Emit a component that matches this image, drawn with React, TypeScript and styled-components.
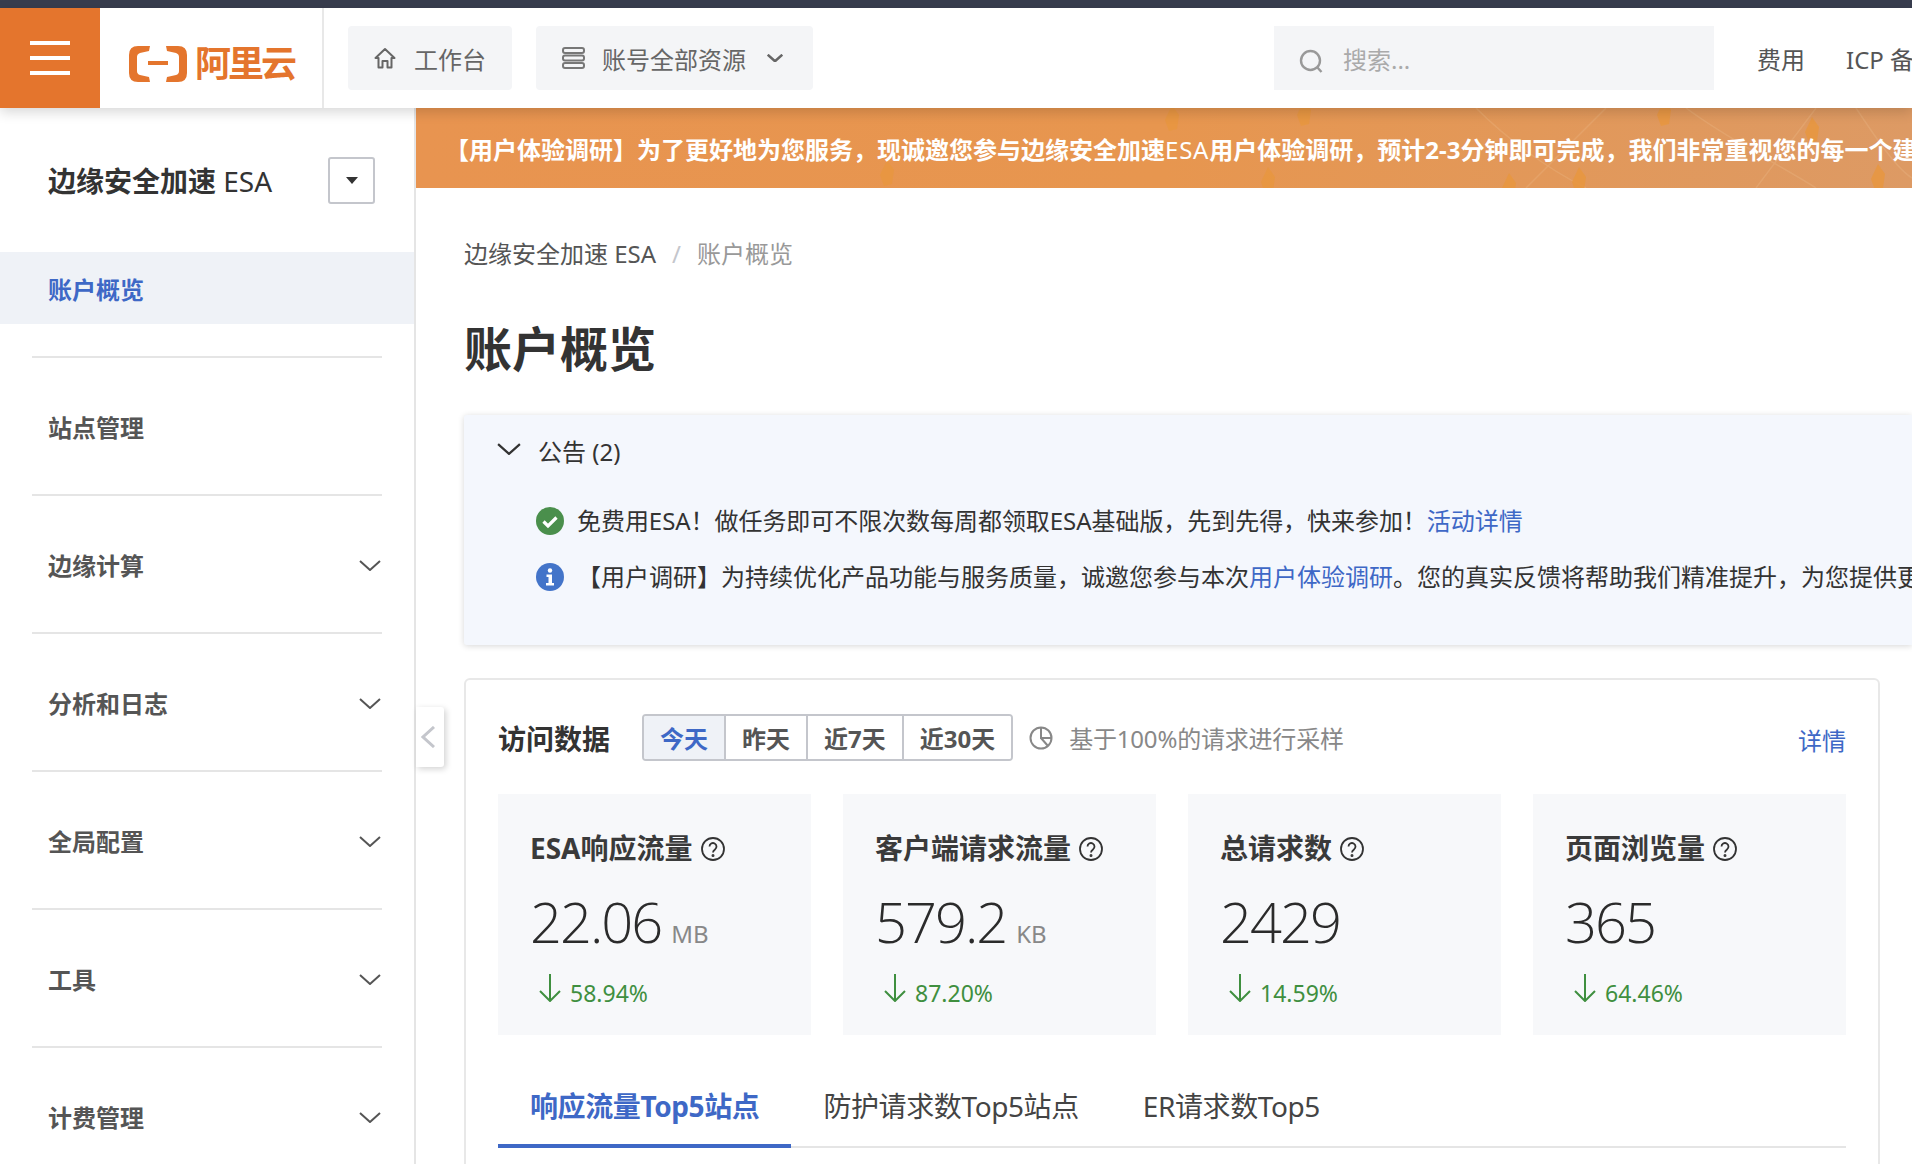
import React from "react";
import styled, { createGlobalStyle } from "styled-components";

const BLUE = "#3e68c6";
const FONT = `"Noto Sans", "Noto Sans CJK SC", sans-serif`;

const GlobalStyle = createGlobalStyle`
  html, body {
    margin: 0;
    padding: 0;
    background: #fff;
    font-family: ${FONT};
    color: #333;
  }
  * {
    box-sizing: border-box;
  }
`;

const Page = styled.div`
  width: 1912px;
  height: 1164px;
  overflow: hidden;
  display: flex;
  flex-direction: column;
`;

const TopStrip = styled.div`
  height: 8px;
  flex: none;
  background: #383d4e;
`;

const Header = styled.header`
  height: 100px;
  flex: none;
  display: flex;
  align-items: center;
  background: #fff;
  box-shadow: 0 4px 12px rgba(0, 0, 0, 0.16);
  position: relative;
  z-index: 2;
`;

const MenuButton = styled.div`
  width: 100px;
  height: 100%;
  flex: none;
  background: #e4752d;
  display: flex;
  flex-direction: column;
  align-items: center;
  justify-content: center;
  gap: 11px;
`;

const MenuLine = styled.span`
  width: 40px;
  height: 4px;
  background: #fff;
`;

const LogoBox = styled.div`
  width: 224px;
  height: 100%;
  flex: none;
  display: flex;
  align-items: center;
  gap: 8px;
  padding: 12px 0 0 29px;
  border-right: 2px solid #e8e8e8;
`;

const LogoText = styled.span`
  font-size: 36px;
  line-height: 40px;
  font-weight: 700;
  letter-spacing: -3px;
  color: #e4752d;
`;

const HeaderButton = styled.div<{ $gap: number; $pad: string }>`
  height: 64px;
  flex: none;
  margin-left: 24px;
  padding: ${(p) => p.$pad};
  display: flex;
  align-items: center;
  gap: ${(p) => p.$gap}px;
  background: #f4f5f7;
  border-radius: 4px;
  font-size: 24px;
  color: #666;
`;

const Search = styled.div`
  width: 440px;
  height: 64px;
  flex: none;
  margin-left: 461px;
  padding-left: 25px;
  display: flex;
  align-items: center;
  gap: 19px;
  background: #f4f5f7;
  font-size: 24px;
  color: #aaa;
`;

const HeaderLink = styled.span<{ $left: number }>`
  flex: none;
  margin-left: ${(p) => p.$left}px;
  font-size: 24px;
  color: #555;
  white-space: nowrap;
`;

const Body = styled.div`
  flex: 1;
  min-height: 0;
  display: flex;
`;

const Sidebar = styled.aside`
  width: 416px;
  flex: none;
  border-right: 2px solid #e5e5e5;
  overflow: hidden;
`;

const SideTitle = styled.div`
  height: 144px;
  padding: 0 39px 0 48px;
  display: flex;
  align-items: center;
  justify-content: space-between;
  font-size: 28px;
  font-weight: 700;
  color: #333;
`;

const Thin = styled.span`
  font-weight: 400;
`;

const BannerEsa = styled(Thin)`
  letter-spacing: 0.8px;
`;

const SideSelect = styled.div`
  width: 47px;
  height: 47px;
  border: 2px solid #c4c6cc;
  border-radius: 3px;
  display: flex;
  align-items: center;
  justify-content: center;
`;

const Caret = styled.span`
  width: 0;
  height: 0;
  border-left: 6px solid transparent;
  border-right: 6px solid transparent;
  border-top: 7px solid #333;
`;

const ActiveItem = styled.div`
  height: 72px;
  padding-left: 48px;
  display: flex;
  align-items: center;
  background: #eff2f7;
  font-size: 24px;
  font-weight: 700;
  color: ${BLUE};
`;

const NavList = styled.nav`
  margin-top: 32px;
  padding: 0 32px;
`;

const NavItem = styled.div`
  height: 138px;
  padding: 0 1px 0 16px;
  display: flex;
  align-items: center;
  justify-content: space-between;
  border-top: 2px solid #e5e5e5;
  font-size: 24px;
  font-weight: 700;
  color: #555;
`;

const Content = styled.main`
  flex: 1;
  min-width: 0;
  position: relative;
`;

const Banner = styled.div`
  height: 80px;
  position: relative;
  overflow: hidden;
  padding-left: 29px;
  display: flex;
  align-items: center;
  background: linear-gradient(90deg, #e89450 0%, #e7964f 50%, #dd9a64 100%);
  font-size: 24px;
  font-weight: 700;
  color: #fff;
  white-space: nowrap;
`;

const BannerArt = styled.svg`
  position: absolute;
  left: 0;
  top: 0;
  width: 1496px;
  height: 80px;
`;

const BannerText = styled.span`
  position: relative;
`;

const Main = styled.div`
  padding: 48px 32px 0 48px;
`;

const Breadcrumb = styled.div`
  display: flex;
  align-items: center;
  font-size: 24px;
  line-height: 36px;
  color: #555;
`;

const CrumbSlash = styled.span`
  margin: 0 16px;
  color: #c4c6cc;
`;

const CrumbCurrent = styled.span`
  color: #999;
`;

const PageTitle = styled.h1`
  margin: 45px 0 0;
  font-size: 48px;
  line-height: 64px;
  font-weight: 700;
  color: #333;
`;

const Notice = styled.section`
  margin: 34px -32px 0 0;
  min-height: 230px;
  padding: 19px 0 0 33px;
  background: #f4f7fd;
  border-radius: 3px 0 0 3px;
  box-shadow: 0 1px 6px rgba(0, 0, 0, 0.16);
  font-size: 24px;
  line-height: 36px;
  white-space: nowrap;
  overflow: hidden;
`;

const NoticeHead = styled.div`
  display: flex;
  align-items: center;
  gap: 17px;
  color: #333;
`;

const NoticeRows = styled.div`
  margin: 33px 0 0 39px;
  display: flex;
  flex-direction: column;
  gap: 20px;
`;

const NoticeRow = styled.div<{ $tight?: boolean }>`
  display: flex;
  align-items: center;
  gap: 13px;
  color: #333;
  letter-spacing: ${(p) => (p.$tight ? "-0.05px" : "0")};
`;

const TextLink = styled.a`
  color: ${BLUE};
  text-decoration: none;
`;

const StatsPanel = styled.section`
  margin-top: 33px;
  height: 600px;
  padding: 34px 32px;
  border: 2px solid #e8e8e8;
  border-radius: 6px;
`;

const Toolbar = styled.div`
  height: 47px;
  display: flex;
  align-items: center;
`;

const PanelTitle = styled.h2`
  margin: 0 32px 0 0;
  font-size: 28px;
  font-weight: 700;
  color: #333;
`;

const RangeGroup = styled.div`
  height: 47px;
  display: flex;
  border: 2px solid #c4c6cc;
  border-radius: 4px;
  overflow: hidden;
`;

const RangeButton = styled.div<{ $active?: boolean }>`
  padding: 0 16px;
  display: flex;
  align-items: center;
  font-size: 24px;
  font-weight: 700;
  background: ${(p) => (p.$active ? "#eff2f7" : "#fff")};
  color: ${(p) => (p.$active ? BLUE : "#555")};
  & + & {
    border-left: 2px solid #c4c6cc;
  }
`;

const Sampling = styled.div`
  margin-left: 16px;
  display: flex;
  align-items: center;
  gap: 16px;
  font-size: 24px;
  color: #888;
  letter-spacing: -0.2px;
`;

const DetailLink = styled(TextLink)`
  margin-left: auto;
  padding-top: 4px;
  font-size: 24px;
`;

const StatGrid = styled.div`
  margin-top: 33px;
  display: grid;
  grid-template-columns: repeat(4, 1fr);
  gap: 32px;
`;

const StatCard = styled.div`
  height: 241px;
  padding: 36px 32px 0;
  background: #f7f8fa;
`;

const StatLabel = styled.div`
  display: flex;
  align-items: center;
  gap: 8px;
  font-size: 28px;
  line-height: 36px;
  font-weight: 700;
  color: #3a3a3a;
`;

const StatValue = styled.div`
  height: 64px;
  margin-top: 23px;
  display: flex;
  align-items: baseline;
  gap: 10px;
  font-family: "Open Sans", "Noto Sans", sans-serif;
  font-size: 56px;
  line-height: 64px;
  font-weight: 300;
  letter-spacing: -2px;
  color: #2b2b2b;
`;

const StatUnit = styled.span`
  font-family: ${FONT};
  font-size: 24px;
  line-height: 24px;
  font-weight: 400;
  letter-spacing: 0;
  color: #888;
`;

const StatDelta = styled.div`
  margin-top: 21px;
  padding-left: 9px;
  display: flex;
  align-items: flex-start;
  gap: 9px;
  font-size: 23px;
  line-height: 28px;
  color: #3f8f3f;
`;

const DeltaText = styled.span`
  padding-top: 5px;
`;

const TabBar = styled.div`
  display: flex;
  border-bottom: 2px solid #e5e5e5;
`;

const Tab = styled.div<{ $active?: boolean }>`
  padding: 53px 32px 20px;
  margin-bottom: -2px;
  font-size: 28px;
  line-height: 36px;
  letter-spacing: -0.4px;
  font-weight: ${(p) => (p.$active ? 700 : 400)};
  color: ${(p) => (p.$active ? BLUE : "#444")};
  border-bottom: 4px solid ${(p) => (p.$active ? BLUE : "transparent")};
`;

const CollapseHandle = styled.div`
  position: absolute;
  left: 0;
  top: 599px;
  width: 28px;
  height: 60px;
  display: flex;
  align-items: center;
  padding-left: 5px;
  background: #fff;
  border-radius: 0 3px 3px 0;
  box-shadow: 2px 2px 6px rgba(0, 0, 0, 0.18);
`;

const IconNudge = styled.span`
  display: flex;
  padding-top: 6px;
`;

const ChevronSvg = styled.svg<{ $top: number; $left: number }>`
  flex: none;
  margin: ${(p) => p.$top}px 0 0 ${(p) => p.$left}px;
`;

const Chevron = ({
  width = 22,
  color = "#555",
  stroke = 2,
  top = 0,
  left = 0,
}: {
  width?: number;
  color?: string;
  stroke?: number;
  top?: number;
  left?: number;
}) => (
  <ChevronSvg width={width} height={width / 2} viewBox="0 0 22 11" fill="none" $top={top} $left={left}>
    <path d="M1 1l10 9 10-9" stroke={color} strokeWidth={(stroke * 22) / width} />
  </ChevronSvg>
);

const LogoMark = () => (
  <svg width="58" height="36" viewBox="0 0 58 36" fill="#e4752d" style={{ flex: "none" }}>
    <path d="M21 0H9Q0 0 0 9V27Q0 36 9 36H21L20 31 11 29Q8 28 8 25V11Q8 8 11 7L20 5Z" />
    <path d="M37 0H49Q58 0 58 9V27Q58 36 49 36H37L38 31 47 29Q50 28 50 25V11Q50 8 47 7L38 5Z" />
    <rect x="19" y="15" width="20" height="4" />
  </svg>
);

const HomeIcon = () => (
  <svg width="22" height="22" viewBox="0 0 22 22" fill="none" stroke="#666" strokeWidth="2">
    <path d="M1.5 11L11 2l9.500 9h-3v9.500h-4V14h-5v6.500h-4V11z" strokeLinejoin="round" />
  </svg>
);

const ServerIcon = () => (
  <svg width="23" height="22" viewBox="0 0 23 22" fill="none" stroke="#777" strokeWidth="2">
    <rect x="1" y="1" width="21" height="5" rx="2" />
    <rect x="1" y="8.500" width="21" height="5" rx="2" />
    <rect x="1" y="16" width="21" height="5" rx="2" />
  </svg>
);

const SearchIcon = () => (
  <svg width="25" height="25" viewBox="0 0 25 25" fill="none" stroke="#999" strokeWidth="2.400">
    <circle cx="11.500" cy="11.500" r="9.500" />
    <path d="M18 18l4.500 5" />
  </svg>
);

const CheckIcon = () => (
  <svg width="28" height="28" viewBox="0 0 28 28" style={{ flex: "none" }}>
    <circle cx="14" cy="14" r="14" fill="#4a8f4c" />
    <path d="M7.500 14.500l4.500 4.500 8.500-8.500" fill="none" stroke="#fff" strokeWidth="3.200" />
  </svg>
);

const InfoIcon = () => (
  <svg width="28" height="28" viewBox="0 0 28 28" style={{ flex: "none" }}>
    <circle cx="14" cy="14" r="14" fill="#4374c9" />
    <circle cx="14" cy="7.500" r="2.200" fill="#fff" />
    <path d="M10.500 11.500H16V20h2v2.500h-8V20h2.500v-6h-2z" fill="#fff" />
  </svg>
);

const PieClockIcon = () => (
  <svg width="24" height="24" viewBox="0 0 24 24" fill="none" stroke="#888" strokeWidth="2" style={{ flex: "none" }}>
    <circle cx="12" cy="12" r="10.500" />
    <path d="M12 1.500V12h10.500M12 12l7 8" />
  </svg>
);

const HelpIcon = () => (
  <svg width="24" height="24" viewBox="0 0 24 24" fill="none" stroke="#333" strokeWidth="1.800" style={{ flex: "none", marginTop: 1 }}>
    <circle cx="12" cy="12" r="11" />
    <path d="M8.500 9.500a3.500 3.500 0 1 1 5.500 2.900c-1.300.9-2 1.500-2 3.100" />
    <circle cx="12" cy="18.500" r="0.600" fill="#333" />
  </svg>
);

const DownArrow = () => (
  <svg width="22" height="28" viewBox="0 0 22 28" fill="none" stroke="#3f8f3f" strokeWidth="2" style={{ flex: "none" }}>
    <path d="M11 0v27M1 17l10 10 10-10" />
  </svg>
);

const bannerSpots = [
  [471, 65], [756, 10], [852, 72], [888, 5], [1093, 78], [1163, 72], [1248, 5], [1396, 22], [1462, 69],
];

const BannerDecor = () => (
  <BannerArt viewBox="0 0 1496 80">
    <g stroke="#f2c79c" strokeWidth="1.500" fill="none" opacity="0.22">
      <path d="M1060 0c30 30 70 60 110 80M1190 0l-60 60-20 20M1270 0c40 30 90 55 130 80M1400 0l-60 80M1440 0c20 30 40 60 56 70" />
    </g>
    {bannerSpots.map(([x, y]) => (
      <path key={x} d="M0-13L7-3 5 11-3 13-7 2Z" fill="#e8973f" opacity="0.85" transform={`translate(${x} ${y})`} />
    ))}
  </BannerArt>
);

const navItems = ["边缘计算", "分析和日志", "全局配置", "工具", "计费管理"];

const stats = [
  { label: "ESA响应流量", value: "22.06", unit: "MB", delta: "58.94%" },
  { label: "客户端请求流量", value: "579.2", unit: "KB", delta: "87.20%" },
  { label: "总请求数", value: "2429", unit: "", delta: "14.59%" },
  { label: "页面浏览量", value: "365", unit: "", delta: "64.46%" },
];

export default function App() {
  return (
    <Page>
      <GlobalStyle />
      <TopStrip />
      <Header>
        <MenuButton>
          <MenuLine />
          <MenuLine />
          <MenuLine />
        </MenuButton>
        <LogoBox>
          <LogoMark />
          <LogoText>阿里云</LogoText>
        </LogoBox>
        <HeaderButton $gap={18} $pad="0 26px">
          <HomeIcon />
          工作台
        </HeaderButton>
        <HeaderButton $gap={17} $pad="0 30px 0 26px">
          <ServerIcon />
          账号全部资源
          <Chevron width={16} color="#666" stroke={2.5} left={4} />
        </HeaderButton>
        <Search>
          <IconNudge>
            <SearchIcon />
          </IconNudge>
          搜索...
        </Search>
        <HeaderLink $left={43}>费用</HeaderLink>
        <HeaderLink $left={41}>ICP 备案</HeaderLink>
      </Header>
      <Body>
        <Sidebar>
          <SideTitle>
            <span>
              边缘安全加速 <Thin>ESA</Thin>
            </span>
            <SideSelect>
              <Caret />
            </SideSelect>
          </SideTitle>
          <ActiveItem>账户概览</ActiveItem>
          <NavList>
            <NavItem>站点管理</NavItem>
            {navItems.map((item) => (
              <NavItem key={item}>
                {item}
                <Chevron top={3} />
              </NavItem>
            ))}
          </NavList>
        </Sidebar>
        <Content>
          <Banner>
            <BannerDecor />
            <BannerText>
              【用户体验调研】为了更好地为您服务，现诚邀您参与边缘安全加速<BannerEsa>ESA</BannerEsa>用户体验调研，预计2-3分钟即可完成，我们非常重视您的每一个建议
            </BannerText>
          </Banner>
          <CollapseHandle>
            <svg width="14" height="22" viewBox="0 0 14 22" fill="none" stroke="#c4c6cc" strokeWidth="3">
              <path d="M13 1L2 11l11 10" />
            </svg>
          </CollapseHandle>
          <Main>
            <Breadcrumb>
              边缘安全加速 ESA
              <CrumbSlash>/</CrumbSlash>
              <CrumbCurrent>账户概览</CrumbCurrent>
            </Breadcrumb>
            <PageTitle>账户概览</PageTitle>
            <Notice>
              <NoticeHead>
                <Chevron width={24} color="#333" stroke={2.2} top={-6} />
                公告 (2)
              </NoticeHead>
              <NoticeRows>
                <NoticeRow $tight>
                  <CheckIcon />
                  <span>
                    免费用ESA！做任务即可不限次数每周都领取ESA基础版，先到先得，快来参加！<TextLink>活动详情</TextLink>
                  </span>
                </NoticeRow>
                <NoticeRow>
                  <InfoIcon />
                  <span>
                    【用户调研】为持续优化产品功能与服务质量，诚邀您参与本次<TextLink>用户体验调研</TextLink>。您的真实反馈将帮助我们精准提升，为您提供更好的产品与服务
                  </span>
                </NoticeRow>
              </NoticeRows>
            </Notice>
            <StatsPanel>
              <Toolbar>
                <PanelTitle>访问数据</PanelTitle>
                <RangeGroup>
                  <RangeButton $active>今天</RangeButton>
                  <RangeButton>昨天</RangeButton>
                  <RangeButton>近7天</RangeButton>
                  <RangeButton>近30天</RangeButton>
                </RangeGroup>
                <Sampling>
                  <PieClockIcon />
                  基于100%的请求进行采样
                </Sampling>
                <DetailLink>详情</DetailLink>
              </Toolbar>
              <StatGrid>
                {stats.map((s) => (
                  <StatCard key={s.label}>
                    <StatLabel>
                      {s.label}
                      <HelpIcon />
                    </StatLabel>
                    <StatValue>
                      {s.value}
                      {s.unit && <StatUnit>{s.unit}</StatUnit>}
                    </StatValue>
                    <StatDelta>
                      <DownArrow />
                      <DeltaText>{s.delta}</DeltaText>
                    </StatDelta>
                  </StatCard>
                ))}
              </StatGrid>
              <TabBar>
                <Tab $active>响应流量Top5站点</Tab>
                <Tab>防护请求数Top5站点</Tab>
                <Tab>ER请求数Top5</Tab>
              </TabBar>
            </StatsPanel>
          </Main>
        </Content>
      </Body>
    </Page>
  );
}
